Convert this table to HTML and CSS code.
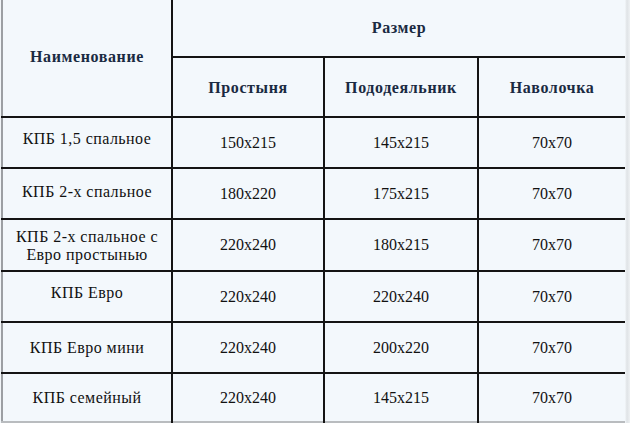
FILE: index.html
```html
<!DOCTYPE html>
<html lang="ru">
<head>
<meta charset="utf-8">
<title>Размеры КПБ</title>
<link rel="stylesheet" href="styles.css">
</head>
<body>
<div class="frame">
<table class="sizes">
  <colgroup>
    <col class="c1"><col class="c2"><col class="c3"><col class="c4">
  </colgroup>
  <thead>
    <tr class="h1">
      <th rowspan="2" class="name">Наименование</th>
      <th colspan="3" class="group">Размер</th>
    </tr>
    <tr class="h2">
      <th>Простыня</th>
      <th>Пододеяльник</th>
      <th>Наволочка</th>
    </tr>
  </thead>
  <tbody>
    <tr class="r1"><td class="lbl up">КПБ 1,5 спальное</td><td>150x215</td><td>145x215</td><td>70x70</td></tr>
    <tr class="r2"><td class="lbl up2">КПБ 2-х спальное</td><td>180x220</td><td>175x215</td><td>70x70</td></tr>
    <tr class="r3"><td class="lbl two">КПБ 2-х спальное с<br>Евро простынью</td><td>220x240</td><td>180x215</td><td>70x70</td></tr>
    <tr class="r4"><td class="lbl up">КПБ Евро</td><td>220x240</td><td>220x240</td><td>70x70</td></tr>
    <tr class="r5"><td class="lbl">КПБ Евро мини</td><td>220x240</td><td>200x220</td><td>70x70</td></tr>
    <tr class="r6"><td class="lbl">КПБ семейный</td><td>220x240</td><td>145x215</td><td>70x70</td></tr>
  </tbody>
</table>
</div>
</body>
</html>
```
FILE: styles.css
```css
html, body {
  margin: 0;
  padding: 0;
  background: #e3e7ea;
}
.frame {
  width: 630px;
  height: 423px;
  overflow: hidden;
  background: linear-gradient(to right, #f2f6f9 0, #f2f6f9 625px, #dfe3e6 627px, #eef1f3 630px);
}
.sizes {
  margin-left: 1px;
  border-collapse: collapse;
  table-layout: fixed;
  width: 624px;
  background: #f3f8fc;
  font-family: "Liberation Serif", "Times New Roman", serif;
  color: #111;
  border-left: 2px solid #9c9fa3;
  border-bottom: 2px solid #b9bcbf;
}
.c1 { width: 170px; }
.c2 { width: 152px; }
.c3 { width: 154px; }
.c4 { width: 147px; }
.sizes th, .sizes td {
  padding: 0;
  text-align: center;
  vertical-align: middle;
  border: 2px solid #141414;
}
.sizes tr > :first-child { border-left: none; }
.sizes tr > :last-child { border-right: none; }
.sizes thead tr:first-child th { border-top: none; }
.sizes tbody tr:last-child td { border-bottom: none; }
.sizes th {
  font-weight: bold;
  font-size: 16px;
  letter-spacing: 0.6px;
  color: #1a2a42;
}
.sizes .group { border-bottom-width: 1px; }
.sizes td {
  font-size: 16px;
  line-height: 18px;
}
.sizes td.lbl { letter-spacing: 0.45px; }
.h1 { height: 57px; }
.h2 { height: 60px; }
.h1 .name { padding-bottom: 2px; }
.h2 th { padding-top: 2px; }
.r1 { height: 51px; }
.r2 { height: 51px; }
.r3 { height: 52px; }
.r4 { height: 51px; }
.r5 { height: 51px; }
.r6 { height: 49px; }
.sizes td.up { padding-bottom: 8px; }
.sizes td.up2 { padding-bottom: 4px; }
.sizes td.two { padding-top: 2px; }
```
